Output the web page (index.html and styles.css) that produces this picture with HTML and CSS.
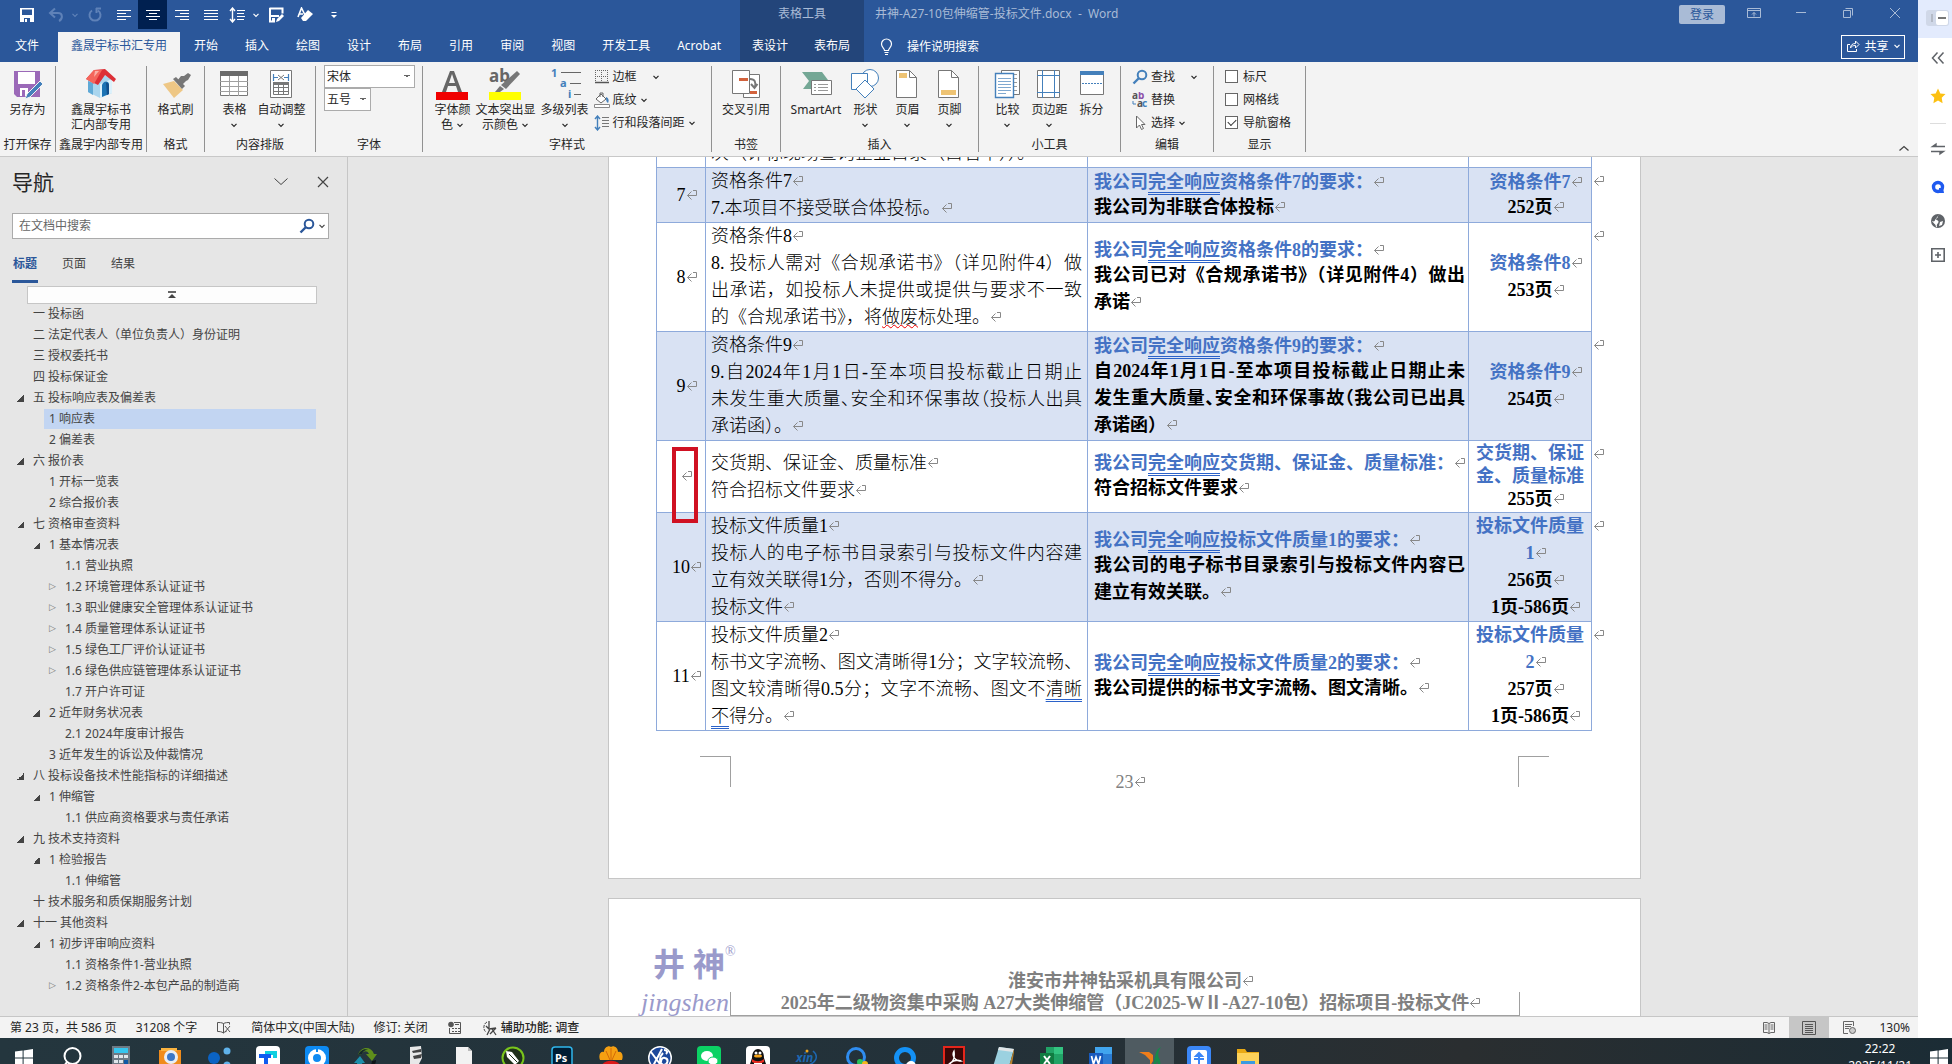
FILE: index.html
```html
<!DOCTYPE html>
<html lang="zh-CN">

<head>
    <meta charset="UTF-8">
    <meta name="viewport" content="width=device-width, initial-scale=1.0">
    <title>井神-A27-10包伸缩管-投标文件.docx - Word</title>
    <link rel="stylesheet" href="styles.css">
</head>

<body>
    <svg class="sprite" aria-hidden="true">
        <symbol id="chev" viewBox="0 0 8 8"><path d="M1.5 2.8 4 5.300l2.500-2.500" fill="none" stroke="currentColor" stroke-width="1.200"/></symbol>
        <symbol id="lens" viewBox="0 0 16 16"><circle cx="10" cy="6" r="4.300" fill="none" stroke="currentColor" stroke-width="2"/><path d="M7 9 1.500 14.500" stroke="currentColor" stroke-width="2.400"/></symbol>
        <symbol id="win" viewBox="0 0 18 18"><path d="M0 2.600 7.600 1.500v7H0zM8.600 1.400 18 0v8.500H8.600zM0 9.500h7.600v7L0 15.400zM8.600 9.500H18V18l-9.400-1.400z" fill="#fff"/></symbol>
    </svg>

    <div class="desktop">
        <div class="app">
            <header class="titlebar">
                <div class="quick">
                    <button class="qa" aria-label="保存"><svg width="16" height="16"><path d="M1 1h14v14H1z" fill="#fff"/><path d="M3 2.500h10V8H3zM5 11h6v4H5z" fill="#2b579a"/><path d="M6 12h2v3H6z" fill="#fff"/></svg></button>
                    <button class="qa dim" aria-label="撤消"><svg width="16" height="16"><path d="M7 1.500 2 6l5 4.500M2.500 6H10c5 0 5 6 1 8" fill="none" stroke="currentColor" stroke-width="2"/></svg></button>
                    <button class="qa narrow dim" aria-label="撤消列表"><svg width="8" height="8"><use href="#chev"/></svg></button>
                    <button class="qa dim" aria-label="恢复"><svg width="16" height="16"><path d="M5 3.500a5.500 5.500 0 1 0 6 0M9 1.500h5M9.500 1v5" fill="none" stroke="currentColor" stroke-width="2"/></svg></button>
                    <button class="qa" aria-label="左对齐"><svg width="16" height="16"><path d="M1 3.500h14M1 6.500h9M1 9.500h14M1 12.500h9" stroke="#fff"/></svg></button>
                    <button class="qa on" aria-label="居中"><svg width="16" height="16"><path d="M1 3.500h14M4 6.500h8M1 9.500h14M4 12.500h8" stroke="#fff"/></svg></button>
                    <button class="qa" aria-label="右对齐"><svg width="16" height="16"><path d="M1 3.500h14M6 6.500h9M1 9.500h14M6 12.500h9" stroke="#fff"/></svg></button>
                    <button class="qa" aria-label="两端对齐"><svg width="16" height="16"><path d="M1 3.500h14M1 6.500h14M1 9.500h14M1 12.500h14" stroke="#fff"/></svg></button>
                    <button class="qa close-next" aria-label="行距"><svg width="16" height="16"><path d="M3.500 1v14M1 4l2.500-3L6 4M1 12l2.500 3L6 12" fill="none" stroke="#fff" stroke-width="1.400"/><path d="M8 3.500h8M8 6.500h7M8 9.500h8M8 12.500h7" stroke="#fff"/></svg></button>
                    <button class="qa narrow" aria-label="行距列表"><svg width="8" height="8"><use href="#chev"/></svg></button>
                    <button class="qa" aria-label="另存为"><svg width="16" height="16"><path d="M1.500 1.500h13v5M2 1v13.500h5" fill="none" stroke="#fff" stroke-width="2"/><path d="M3 8h8v2H3zM4 11h3v4H4z" fill="#fff"/><path d="m8 15 1-3 5-5 2 2-5 5z" fill="#fff"/></svg></button>
                    <button class="qa" aria-label="清除格式"><svg width="16" height="16"><path d="M1 10 4.500 1 8 8M2 7h4" fill="none" stroke="#fff" stroke-width="1.600"/><path d="m11 3 5 4-7 7H6l-2-3z" fill="#fff"/></svg></button>
                    <button class="qa" aria-label="自定义快速访问工具栏"><svg width="8" height="8"><path d="M1.500 1.500h5" stroke="#fff"/><path d="M1 4h6L4 7z" fill="#fff"/></svg></button>
                </div>
                <div class="context-title">表格工具</div>
                <div class="caption">
                    <span class="doc-name">井神-A27-10包伸缩管-投标文件.docx&nbsp; -&nbsp; Word</span>
                    <button class="login">登录</button>
                    <button class="wc" aria-label="功能区显示选项"><svg width="14" height="14"><path d="M.5 2.500h13v9H.5zM.5 4.500h13M7 10.500v-4M5 8.500l2-2 2 2" fill="none" stroke="currentColor"/></svg></button>
                    <button class="wc" aria-label="最小化"><svg width="12" height="12"><path d="M1 5.500h10" stroke="currentColor"/></svg></button>
                    <button class="wc" aria-label="还原"><svg width="12" height="12"><path d="M1.500 3.500h7v7h-7zM3.500 1.500h7v7" fill="none" stroke="currentColor"/></svg></button>
                    <button class="wc" aria-label="关闭"><svg width="12" height="12"><path d="m1 1 10 10M11 1 1 11" stroke="currentColor"/></svg></button>
                </div>
                <nav class="tabs">
                    <a class="file" href="#">文件</a>
                    <a class="active" href="#">鑫晟宇标书汇专用</a>
                    <a href="#">开始</a>
                    <a href="#">插入</a>
                    <a href="#">绘图</a>
                    <a href="#">设计</a>
                    <a href="#">布局</a>
                    <a href="#">引用</a>
                    <a href="#">审阅</a>
                    <a href="#">视图</a>
                    <a href="#">开发工具</a>
                    <a href="#">Acrobat</a>
                </nav>
                <nav class="tabs context-tabs">
                    <a href="#">表设计</a>
                    <a href="#">表布局</a>
                </nav>
                <div class="tell-me">
                    <svg width="16" height="18"><path d="M5.500 12.500c0-2-3-3-3-6.500a5 5 0 0 1 10 0c0 3.500-3 4.500-3 6.500zM5.500 14.500h4M6 16.500h3" fill="none" stroke="#fff" stroke-width="1.200"/></svg>
                    <a href="#">操作说明搜索</a>
                    <button class="share"><svg width="14" height="14"><path d="M4 5.500H1.500v7h9V10M4.500 9c0-3 2-4.500 5-4.500V2l3.500 3.500L9.500 9V6.500C7 6.500 5.500 7 4.500 9z" fill="none" stroke="#fff"/></svg>共享<svg width="8" height="8"><use href="#chev"/></svg></button>
                </div>
            </header>

            <div class="ribbon">
                <section class="group">
                    <div class="tools">
                        <button class="big"><svg width="32" height="32"><path d="M3 3h26v26H6l-3-3z" fill="#9b69b8"/><path d="M7 4h17v12H7zM9 20h8v8H9z" fill="#fff"/><path d="M11 22h3v6h-3z" fill="#9b69b8"/><path d="m14 31 2-5L29 13l3 3-13 13z" fill="#4480bb" stroke="#f3f3f3"/></svg><span>另存为</span></button>
                    </div>
                    <h2>打开保存</h2>
                </section>
                <section class="group">
                    <div class="tools">
                        <button class="big"><svg width="32" height="32"><path d="M3 11v13l12 6 12-5V11L16 5z" fill="#a9d5ee"/><path d="m3 13 5 2v12l-5-3z" fill="#5fa9d6"/><path d="M15 16v14l12-5V11z" fill="#dcf1fb"/><path d="M17 17c1-4 7-5 7 0v9l-7 3z" fill="#1c73b4"/><path d="M21 15c2-1 3 1 3 3v8l-2 1z" fill="#124f8c"/><path d="M1 11 9 2l11-1 11 10-2 3-9-7-7 10z" fill="#dd2f36"/><path d="M9 2h8L9 16l-8-5z" fill="#f4665c"/><path d="M10 3h4l-5 6z" fill="#fbb0a6"/></svg><span>鑫晟宇标书<br>汇内部专用</span></button>
                    </div>
                    <h2>鑫晟宇内部专用</h2>
                </section>
                <section class="group">
                    <div class="tools">
                        <button class="big"><svg width="32" height="32"><path d="m4 16 11-3 9 9-9 8z" fill="#eec785"/><path d="m14 11 3-2 9 9-3 3z" fill="#777"/><path d="m18 13 4-5 3 0 4-3 3 2-3 5-2 1-4 4z" fill="#777"/></svg><span>格式刷</span></button>
                    </div>
                    <h2>格式</h2>
                </section>
                <section class="group g-table">
                    <div class="tools">
                        <button class="big"><svg width="28" height="32"><path d="M.5 3.500h27v24H.5z" fill="#fff" stroke="#777"/><path d="M0 3h28v5H0z" fill="#6b6b6b"/><path d="M0 13.500h28M0 18.500h28M0 23.500h28M9.500 8v20M18.500 8v20" stroke="#a0a0a0"/></svg><span>表格</span><svg class="chev" width="8" height="8"><use href="#chev"/></svg></button>
                        <button class="big"><svg width="24" height="32"><path d="M1.500 2.500h21v27h-21z" fill="#fff" stroke="#777"/><path d="M4.500 6v7M19.500 6v7M5 9.500h4M15 9.500h4" stroke="#4480bb" stroke-width="1.200"/><path d="m9 7 6 5M15 7l-6 5" stroke="#777"/><path d="M4.500 14.500h15v12h-15zM4 19.500h16M4 23.500h16M9.500 17v9M14.500 17v9" fill="none" stroke="#777"/><path d="M4 14h16v3H4z" fill="#777"/></svg><span>自动调整</span><svg class="chev" width="8" height="8"><use href="#chev"/></svg></button>
                    </div>
                    <h2>内容排版</h2>
                </section>
                <section class="group g-font">
                    <div class="rows">
                        <select class="font-name" aria-label="字体"><option>宋体</option></select>
                        <select class="font-size" aria-label="字号"><option>五号</option></select>
                    </div>
                    <h2>字体</h2>
                </section>
                <section class="group g-style">
                    <div class="tools">
                        <button class="big"><svg width="32" height="32"><path d="m6 24 8-21h4l8 21h-4l-2-6h-8l-2 6zM13 15h6L16 6z" fill="#666"/><path d="M0 24h32v8H0z" fill="#f00000"/></svg><span>字体颜<br>色 <svg width="8" height="8"><use href="#chev"/></svg></span></button>
                        <button class="big"><svg width="32" height="32"><text x="0" y="14" class="ab">ab</text><path d="m28 3 3 3-14 15-5-4z" fill="#777"/><path d="m11 18 4 3-4 3H6z" fill="#777"/><path d="M0 24h32v8H0z" fill="#ff0"/></svg><span>文本突出显<br>示颜色 <svg width="8" height="8"><use href="#chev"/></svg></span></button>
                        <button class="big"><svg width="32" height="32"><text x="2" y="9" class="num">1</text><text x="11" y="19" class="num">a</text><text x="19" y="30" class="num">i</text><path d="M12 4.500h20M21 15.500h11M25 26.500h7" stroke="#666"/></svg><span>多级列表</span><svg class="chev" width="8" height="8"><use href="#chev"/></svg></button>
                        <div class="rows">
                            <button class="small wide"><svg width="16" height="16"><path d="M1.500 1v13M13.500 1v13M7.500 1v13M1 1.500h13M1 7.500h13" stroke="#666" stroke-dasharray="1 1"/><path d="M1 13.500h14" stroke="#555" stroke-width="1.500"/></svg>边框<svg width="8" height="8"><use href="#chev"/></svg></button>
                            <button class="small"><svg width="16" height="16"><path d="M7 2 2 7l5 4 5-4z" fill="#fff" stroke="#666"/><path d="M6 5V1h3v4" fill="none" stroke="#666"/><path d="M12 5c3 1 3 4 2 6-2-1-2-4-2-6z" fill="#4480bb"/><path d="M.5 12.500h15v3H.5z" fill="#fff" stroke="#888"/></svg>底纹<svg width="8" height="8"><use href="#chev"/></svg></button>
                            <button class="small"><svg width="16" height="16"><path d="M3.500 1v14M1 4l2.500-3L6 4M1 12l2.500 3L6 12" fill="none" stroke="#4480bb" stroke-width="1.400"/><path d="M8 2.500h7M8 5.500h7M8 8.500h7M8 11.500h7" stroke="#777"/></svg>行和段落间距<svg width="8" height="8"><use href="#chev"/></svg></button>
                        </div>
                    </div>
                    <h2>字样式</h2>
                </section>
                <section class="group">
                    <div class="tools">
                        <button class="big"><svg width="32" height="32"><path d="M13.500 6.500h16v23h-16z" fill="#fff" stroke="#777"/><path d="M20 11c5 0 6 3 5 8M21 16l3.500 4 3-4" fill="none" stroke="#777" stroke-width="2"/><path d="M20 23h7v3h-7z" fill="#d2623c"/><path d="M2.500 2.500h17v23h-17z" fill="#fff" stroke="#777"/><path d="M9 10h9v3H9z" fill="#d2623c"/></svg><span>交叉引用</span></button>
                    </div>
                    <h2>书签</h2>
                </section>
                <section class="group g-insert">
                    <div class="tools">
                        <button class="big smart"><svg width="32" height="32"><path d="M2 4h20l6 8-5 9H3l6-8z" fill="#74a795"/><path d="M11.500 12.500h20v14h-20z" fill="#fff" stroke="#777"/><path d="M14 16.500h2M18 16.500h10M14 19.500h2M18 19.500h10M14 22.500h2M18 22.500h10" stroke="#999"/></svg><span>SmartArt</span></button>
                        <button class="big"><svg width="28" height="32"><circle cx="19" cy="10" r="8.500" fill="#fff" stroke="#4480bb"/><path d="M.5 5.500h16v16H.5z" fill="#fff" stroke="#4480bb"/><path d="m14 12 9 9-9 9-9-9z" fill="#fff" stroke="#4480bb"/></svg><span>形状</span><svg class="chev" width="8" height="8"><use href="#chev"/></svg></button>
                        <button class="big"><svg width="28" height="32"><path d="M3.500 2.500h13l7 7v20h-20z" fill="#fff" stroke="#777"/><path d="M16.500 2.500v7h7" fill="none" stroke="#777"/><path d="M6 5h8v5H6z" fill="#eec373"/></svg><span>页眉</span><svg class="chev" width="8" height="8"><use href="#chev"/></svg></button>
                        <button class="big"><svg width="28" height="32"><path d="M3.500 2.500h13l7 7v20h-20z" fill="#fff" stroke="#777"/><path d="M16.500 2.500v7h7" fill="none" stroke="#777"/><path d="M6 22h15v5H6z" fill="#eec373"/></svg><span>页脚</span><svg class="chev" width="8" height="8"><use href="#chev"/></svg></button>
                    </div>
                    <h2>插入</h2>
                </section>
                <section class="group g-mini">
                    <div class="tools">
                        <button class="big"><svg width="28" height="32"><path d="M8.500 2.500h18v24h-18z" fill="#fff" stroke="#777"/><path d="M20 6.500h4M20 10.500h4M20 14.500h4M20 18.500h4M20 22.500h4" stroke="#999"/><path d="M2.500 5.500h18v24h-18z" fill="#fff" stroke="#4480bb" stroke-width="1.400"/><path d="M5 10.500h13M5 13.500h13M5 16.500h13M5 19.500h13M5 22.500h13M5 25.500h8" stroke="#7fa8d0"/></svg><span>比较</span><svg class="chev" width="8" height="8"><use href="#chev"/></svg></button>
                        <button class="big"><svg width="28" height="32"><path d="M2.500 2.500h22v27h-22z" fill="#fff" stroke="#777"/><path d="M7.500 2v28M19.500 2v28M2 7.500h23M2 24.500h23" stroke="#4480bb"/></svg><span>页边距</span><svg class="chev" width="8" height="8"><use href="#chev"/></svg></button>
                        <button class="big"><svg width="28" height="32"><path d="M2.500 3.500h23v23h-23z" fill="#fff" stroke="#777"/><path d="M2 3h24v4H2z" fill="#4480bb"/><path d="M4 15.500h20" stroke="#4480bb" stroke-dasharray="2 1"/></svg><span>拆分</span></button>
                    </div>
                    <h2>小工具</h2>
                </section>
                <section class="group g-edit">
                    <div class="rows">
                        <button class="small wide"><svg class="blue" width="16" height="16"><use href="#lens"/></svg>查找<svg width="8" height="8"><use href="#chev"/></svg></button>
                        <button class="small"><svg width="16" height="16"><text x="0" y="7" class="rep">a</text><text x="6" y="7" class="rep purple">b</text><text x="5" y="15" class="rep">a</text><text x="10" y="15" class="rep blue">c</text><path d="M1 9v3h3" fill="none" stroke="#4480bb"/></svg>替换</button>
                        <button class="small"><svg width="16" height="16"><path d="M4.500 1v12l3-3 2 4.500 2-1L9.500 9.500H13z" fill="#fff" stroke="#666"/></svg>选择<svg width="8" height="8"><use href="#chev"/></svg></button>
                    </div>
                    <h2>编辑</h2>
                </section>
                <section class="group g-show">
                    <div class="rows">
                        <label class="check"><input type="checkbox">标尺</label>
                        <label class="check"><input type="checkbox">网格线</label>
                        <label class="check"><input type="checkbox" checked>导航窗格</label>
                    </div>
                    <h2>显示</h2>
                </section>
                <button class="collapse" aria-label="折叠功能区"><svg width="12" height="8"><path d="m1.500 6.500 4.500-4 4.500 4" fill="none" stroke="#444" stroke-width="1.300"/></svg></button>
            </div>

            <div class="workspace">
                <aside class="navpane">
                    <div class="nav-head">
                        <h1>导航</h1>
                        <button aria-label="任务窗格选项"><svg width="16" height="10"><path d="m1.500 1.500 6.500 6 6.500-6" fill="none" stroke="#444"/></svg></button>
                        <button aria-label="关闭"><svg width="12" height="12"><path d="m1 1 10 10M11 1 1 11" stroke="#444" stroke-width="1.200"/></svg></button>
                    </div>
                    <div class="search">
                        <input type="text" aria-label="在文档中搜索" placeholder="在文档中搜索">
                        <button aria-label="搜索"><svg width="16" height="16"><use href="#lens"/></svg></button>
                        <button class="opt" aria-label="搜索选项"><svg width="8" height="8"><use href="#chev"/></svg></button>
                    </div>
                    <div class="nav-tabs">
                        <a class="active" href="#">标题</a>
                        <a href="#">页面</a>
                        <a href="#">结果</a>
                    </div>
                    <button class="jump" aria-label="跳转到文档开头"><svg width="8" height="8"><path d="M0 1h8" stroke="#333" stroke-width="1.500"/><path d="M4 3 0 7h8z" fill="#444"/></svg></button>
                    <ul class="tree">
                        <li><i></i><a href="#">一 投标函</a></li>
                        <li><i></i><a href="#">二 法定代表人（单位负责人）身份证明</a></li>
                        <li><i></i><a href="#">三 授权委托书</a></li>
                        <li><i></i><a href="#">四 投标保证金</a></li>
                        <li><i class="open"></i><a href="#">五 投标响应表及偏差表</a></li>
                        <li class="l2 current"><i></i><a href="#">1 响应表</a></li>
                        <li class="l2"><i></i><a href="#">2 偏差表</a></li>
                        <li><i class="open"></i><a href="#">六 报价表</a></li>
                        <li class="l2"><i></i><a href="#">1 开标一览表</a></li>
                        <li class="l2"><i></i><a href="#">2 综合报价表</a></li>
                        <li><i class="open"></i><a href="#">七 资格审查资料</a></li>
                        <li class="l2"><i class="open"></i><a href="#">1 基本情况表</a></li>
                        <li class="l3"><i></i><a href="#">1.1 营业执照</a></li>
                        <li class="l3"><i class="shut"></i><a href="#">1.2 环境管理体系认证证书</a></li>
                        <li class="l3"><i class="shut"></i><a href="#">1.3 职业健康安全管理体系认证证书</a></li>
                        <li class="l3"><i class="shut"></i><a href="#">1.4 质量管理体系认证证书</a></li>
                        <li class="l3"><i class="shut"></i><a href="#">1.5 绿色工厂评价认证证书</a></li>
                        <li class="l3"><i class="shut"></i><a href="#">1.6 绿色供应链管理体系认证证书</a></li>
                        <li class="l3"><i></i><a href="#">1.7 开户许可证</a></li>
                        <li class="l2"><i class="open"></i><a href="#">2 近年财务状况表</a></li>
                        <li class="l3"><i></i><a href="#">2.1 2024年度审计报告</a></li>
                        <li class="l2"><i></i><a href="#">3 近年发生的诉讼及仲裁情况</a></li>
                        <li><i class="open"></i><a href="#">八 投标设备技术性能指标的详细描述</a></li>
                        <li class="l2"><i class="open"></i><a href="#">1 伸缩管</a></li>
                        <li class="l3"><i></i><a href="#">1.1 供应商资格要求与责任承诺</a></li>
                        <li><i class="open"></i><a href="#">九 技术支持资料</a></li>
                        <li class="l2"><i class="open"></i><a href="#">1 检验报告</a></li>
                        <li class="l3"><i></i><a href="#">1.1 伸缩管</a></li>
                        <li><i></i><a href="#">十 技术服务和质保期服务计划</a></li>
                        <li><i class="open"></i><a href="#">十一 其他资料</a></li>
                        <li class="l2"><i class="open"></i><a href="#">1 初步评审响应资料</a></li>
                        <li class="l3"><i></i><a href="#">1.1 资格条件1-营业执照</a></li>
                        <li class="l3"><i class="shut"></i><a href="#">1.2 资格条件2-本包产品的制造商</a></li>
                    </ul>
                </aside>

                <main class="canvas">
                    <article class="page first">
                        <table class="response">
                            <colgroup><col class="c-no"><col class="c-req"><col class="c-ans"><col class="c-page"><col class="c-end"></colgroup>
                            <tr>
                                <td></td>
                                <td><p>次（评标现场查询企业目录（白名单））。</p></td>
                                <td></td>
                                <td></td>
                                <td class="end"></td>
                            </tr>
                            <tr class="shade">
                                <td class="no"><p class="ret">7</p></td>
                                <td><p class="ret">资格条件7</p><p class="ret">7.本项目不接受联合体投标。</p></td>
                                <td class="ans"><p class="lead ret">我公司<u>完全响应</u>资格条件7的要求：</p><p class="ret">我公司为非联合体投标</p></td>
                                <td class="ref"><p class="lead ret">资格条件7</p><p class="ret">252页</p></td>
                                <td class="end"><p class="ret"></p></td>
                            </tr>
                            <tr>
                                <td class="no"><p class="ret">8</p></td>
                                <td><p class="ret">资格条件8</p><p class="full">8. 投标人需对《合规承诺书》（详见附件4）做</p><p class="full">出承诺，如投标人未提供或提供与要求不一致</p><p class="ret">的《合规承诺书》，将<span class="typo">做废</span>标处理。</p></td>
                                <td class="ans"><p class="lead ret">我公司<u>完全响应</u>资格条件8的要求：</p><p class="full">我公司已对《合规承诺书》（详见附件4）做出</p><p class="ret">承诺</p></td>
                                <td class="ref"><p class="lead tall ret">资格条件8</p><p class="ret">253页</p></td>
                                <td class="end"><p class="ret"></p></td>
                            </tr>
                            <tr class="shade">
                                <td class="no"><p class="ret">9</p></td>
                                <td><p class="ret">资格条件9</p><p class="full">9.自2024年1月1日-至本项目投标截止日期止</p><p class="full tight">未发生重大质量、安全和环保事故（投标人出具</p><p class="ret">承诺函）。</p></td>
                                <td class="ans"><p class="lead ret">我公司<u>完全响应</u>资格条件9的要求：</p><p class="full">自2024年1月1日-至本项目投标截止日期止未</p><p class="full tight">发生重大质量、安全和环保事故（我公司已出具</p><p class="ret">承诺函）</p></td>
                                <td class="ref"><p class="lead tall ret">资格条件9</p><p class="ret">254页</p></td>
                                <td class="end"><p class="ret"></p></td>
                            </tr>
                            <tr class="short">
                                <td class="no"><p class="ret"></p><div class="redbox"></div></td>
                                <td><p class="ret">交货期、保证金、质量标准</p><p class="ret">符合招标文件要求</p></td>
                                <td class="ans"><p class="lead ret">我公司<u>完全响应</u>交货期、保证金、质量标准：</p><p class="ret">符合招标文件要求</p></td>
                                <td class="ref"><p class="lead compact">交货期、保证<br>金、质量标准</p><p class="compact ret">255页</p></td>
                                <td class="end"><p class="ret"></p></td>
                            </tr>
                            <tr class="shade">
                                <td class="no"><p class="ret">10</p></td>
                                <td><p class="ret">投标文件质量1</p><p class="full">投标人的电子标书目录索引与投标文件内容建</p><p class="ret">立有效关联得1分，否则不得分。</p><p class="ret">投标文件</p></td>
                                <td class="ans"><p class="lead ret">我公司<u>完全响应</u>投标文件质量1的要求：</p><p class="full">我公司的电子标书目录索引与投标文件内容已</p><p class="ret">建立有效关联。</p></td>
                                <td class="ref"><p class="lead tall ret">投标文件质量<br>1</p><p class="ret">256页</p><p class="ret">1页-586页</p></td>
                                <td class="end"><p class="ret"></p></td>
                            </tr>
                            <tr>
                                <td class="no"><p class="ret">11</p></td>
                                <td><p class="ret">投标文件质量2</p><p class="full">标书文字流畅、图文清晰得1分；文字较流畅、</p><p class="full">图文较清晰得0.5分；文字不流畅、图文不<u>清晰</u></p><p class="ret"><u>不</u>得分。</p></td>
                                <td class="ans"><p class="lead ret">我公司<u>完全响应</u>投标文件质量2的要求：</p><p class="ret">我公司提供的标书文字流畅、图文清晰。</p></td>
                                <td class="ref"><p class="lead tall ret">投标文件质量<br>2</p><p class="ret">257页</p><p class="ret">1页-586页</p></td>
                                <td class="end"><p class="ret"></p></td>
                            </tr>
                        </table>
                        <footer class="page-foot">
                            <span class="corner left"></span>
                            <p class="ret">23</p>
                            <span class="corner right"></span>
                        </footer>
                    </article>
                    <article class="page second">
                        <div class="logo">
                            <span class="logo-cn">井 神<sup>®</sup></span>
                            <span class="logo-en">jingshen</span>
                        </div>
                        <header class="page-head">
                            <p class="ret">淮安市井神钻采机具有限公司</p>
                            <p class="project ret">2025年二级物资集中采购 A27大类伸缩管（JC2025-WⅡ-A27-10包）招标项目-投标文件</p>
                        </header>
                    </article>
                </main>
            </div>

            <footer class="status">
                <span>第 23 页，共 586 页</span>
                <span>31208 个字</span>
                <svg width="16" height="14"><path d="M7.500 2.500c-2-1-4-1-6-1v9c2 0 4 0 6 1.500 1-1 2-1.500 3-1.500M7.500 2.500V12M7.500 2.500c2-1 4-1 6-1v2M9 5l5 6M14 5l-5 6" fill="none" stroke="#555"/></svg>
                <span>简体中文(中国大陆)</span>
                <span>修订: 关闭</span>
                <svg width="16" height="14"><circle cx="4" cy="3.500" r="2.800" fill="#555"/><path d="M7 1.500h6.500v11h-11V7" fill="none" stroke="#555"/><path d="M8 3.500h4M5 7.500h2M8 7.500h2M11 7.500h2M5 10.500h2M8 10.500h2M11 10.500h2" stroke="#555"/></svg>
                <span class="access"><svg width="16" height="16"><path d="M5 2C1 4 1 10 4 12" fill="none" stroke="#444" stroke-dasharray="3 1"/><path d="M7 1v7M4 6l3 3 7-1M8 9l-3 6M10 9l4 6M8 14l6-6" fill="none" stroke="#444" stroke-width="1.300"/></svg>辅助功能: 调查</span>
                <span class="views">
                    <button aria-label="阅读视图"><svg width="14" height="14"><path d="M7 2.500v10M1.500 1.500H5l2 1 2-1h3.500v10H9l-2 1-2-1H1.500zM2.500 4h3M2.500 6h3M2.500 8h3M8.500 4h3M8.500 6h3M8.500 8h3" fill="none" stroke="#666"/></svg></button>
                    <button class="on" aria-label="页面视图"><svg width="14" height="14"><path d="M.5.5h13v13H.5zM3 3.500h8M3 5.500h8M3 7.500h8M3 9.500h8M3 11.500h8" fill="none" stroke="#555"/></svg></button>
                    <button aria-label="Web 版式视图"><svg width="14" height="14"><path d="M11.500 5V.5H1.500v12H6M3 3.500h7M3 5.500h6M3 7.500h4" fill="none" stroke="#666"/><circle cx="10.500" cy="9.500" r="3" fill="#ccc" stroke="#666"/></svg></button>
                    <span class="zoom">130%</span>
                </span>
            </footer>
        </div>

        <aside class="sidebar">
            <div class="toggle"><span></span><b></b></div>
            <button aria-label="收起"><svg width="16" height="16"><path d="M7.500 2.500 2.500 8l5 5.500M13.500 2.500 8.500 8l5 5.500" fill="none" stroke="#5f6368" stroke-width="1.500"/></svg></button>
            <button aria-label="收藏"><svg width="16" height="16"><path d="m8 .5 2.300 4.900 5.200.7-3.800 3.700.9 5.400L8 12.600l-4.600 2.600.9-5.400L.5 6.100l5.200-.7z" fill="#fcc012"/></svg></button>
            <hr>
            <button aria-label="切换"><svg width="16" height="16"><path d="M15 5.500H2.500L6 3v2.500M1 10.500h12.500L10 13v-2.500" fill="#5f6368" stroke="#5f6368" stroke-width="1.400"/></svg></button>
            <button aria-label="搜索"><svg width="16" height="16"><circle cx="8" cy="8" r="4.500" fill="none" stroke="#1f5af0" stroke-width="3.400"/><path d="M9 9h4l1 5H9z" fill="#1f5af0"/></svg></button>
            <button aria-label="浏览"><svg width="16" height="16"><circle cx="8" cy="8" r="7" fill="#5f6368"/><path d="M9 1.500C7 3 9 4 6.500 5.500 5 7 8 7 8.500 8.500S6 11 7 14l-1 0c0-3-3-4-4-6 2 1 3 0 3-1M10 9l3-1-1 4-3 1z" fill="#fff"/></svg></button>
            <button aria-label="添加"><svg width="16" height="16"><path d="M1.800 1.800h12.400v12.400H1.800zM8 5v6M5 8h6" fill="none" stroke="#5f6368" stroke-width="1.600"/></svg></button>
        </aside>

        <footer class="taskbar">
            <button class="start" aria-label="开始"><svg width="18" height="18"><use href="#win"/></svg></button>
            <button aria-label="搜索"><svg width="24" height="24"><circle cx="12.500" cy="10" r="8" fill="none" stroke="#fff" stroke-width="2"/><path d="m7 16-5 7" stroke="#fff" stroke-width="2"/></svg></button>
            <button aria-label="计算器"><svg width="24" height="24"><path d="M3 0h18v24H3z" fill="#6d7a85"/><path d="M5 2h14v5H5z" fill="#36c5ee"/><path d="M5 9h4v3H5zM10 9h4v3h-4zM15 9h4v3h-4zM5 14h4v3H5zM10 14h4v3h-4z" fill="#dfe5ea"/><path d="M15 14h4v8h-4z" fill="#0f58a5"/></svg></button>
            <button aria-label="截图"><svg width="24" height="24"><path d="M1 4h22v18H1z" fill="#f08c1c"/><path d="M3 2h16v3H3z" fill="#fbb440"/><circle cx="13" cy="11" r="7" fill="#e9eef5"/><circle cx="13" cy="11" r="4" fill="#3b78c9"/></svg></button>
            <button aria-label="音频"><svg width="24" height="24"><circle cx="7" cy="12" r="6" fill="#0b63c4"/><circle cx="20" cy="5" r="3.500" fill="#5fb2ea"/><circle cx="20" cy="19" r="3.500" fill="#5fb2ea"/></svg></button>
            <button aria-label="腾讯文档"><svg width="24" height="24"><rect width="24" height="24" rx="4" fill="#fff"/><path d="M9 5h12v7h-4V9H9z" fill="#10cfe0"/><path d="M3 8h12v4h-3v10H8V12H3z" fill="#0f5cf0"/></svg></button>
            <button aria-label="浏览器"><svg width="24" height="24"><rect width="24" height="24" rx="4" fill="#0d8af2"/><circle cx="12" cy="12" r="6.500" fill="none" stroke="#fff" stroke-width="5"/><path d="M12 0v6" stroke="#0d8af2" stroke-width="2"/></svg></button>
            <button aria-label="同步"><svg width="24" height="24"><path d="M4 9C7 0 17 0 20 8l3 0-5 7-6-7 3 0c-2-4-6-3-7 0z" fill="#5f8f1c"/><path d="M4 9c2-4 6-7 10-5-4 0-5 2-6 4z" fill="#14262a"/><path d="m6 10 5 7H8c1 3 3 5 5 6-6 1-10-2-10-6H0z" fill="#1d8fab"/><path d="M22 14c0 6-5 9-10 8 4-1 6-4 6-7z" fill="#0d1518"/></svg></button>
            <button aria-label="打印"><svg width="24" height="24"><path d="m7 1 11-1 1 12-6 12H7z" fill="#e8e8e8"/><path d="m9 5 9-2v3l-8 1zM10 10l9-2-1 4-7 1z" fill="#444"/></svg></button>
            <button aria-label="文档"><svg width="24" height="24"><path d="M4 1h12l4 4v19H4z" fill="#f2f2f2"/><path d="M16 1v4h4z" fill="#bbb"/></svg></button>
            <button aria-label="CorelDRAW"><svg width="24" height="24"><circle cx="12" cy="12" r="10.500" fill="#20301c" stroke="#79c51c" stroke-width="2"/><path d="m5 5 6 1 7 9-4 4-8-8z" fill="#fff"/><path d="m8 8 8 8" stroke="#20301c"/></svg></button>
            <button aria-label="Photoshop"><svg width="24" height="24"><rect x="2" y="1" width="20" height="22" rx="3" fill="#001d33" stroke="#2fb6ec" stroke-width="1.500"/><text x="5" y="16" class="ps">Ps</text></svg></button>
            <button aria-label="中石油"><svg width="24" height="24"><path d="M1 14C-1 8 2 5 5 6c0-5 5-7 7-5 2-2 7 0 7 5 3-1 6 2 4 8z" fill="#f5a012"/><path d="M12 2v12M7 5l4 9M17 5l-4 9" stroke="#d46a08"/><path d="M2 20c4-7 16-7 20 0v4H2z" fill="#dc1818"/></svg></button>
            <button aria-label="XB"><svg width="24" height="24"><circle cx="12" cy="12" r="12" fill="#fff"/><circle cx="12" cy="12" r="10.500" fill="#1b479b"/><path d="m3 6 9 12M14 3 5 20M15 7c-4 4-4 10 0 12 5 0 6-6 2-7-3-1-4 2-4 4M16 4c3 0 4 2 2 4" fill="none" stroke="#fff" stroke-width="2"/></svg></button>
            <button aria-label="微信"><svg width="24" height="24"><rect width="24" height="24" rx="4" fill="#0bd264"/><ellipse cx="10" cy="10" rx="6" ry="5" fill="#fff"/><ellipse cx="16" cy="15" rx="5" ry="4" fill="#fff" stroke="#0bd264"/></svg></button>
            <button aria-label="QQ"><svg width="24" height="24"><rect width="24" height="24" rx="4" fill="#fff"/><path d="M6 12c0-12 12-12 12 0l2 6-2 1v5H6v-5l-2-1z" fill="#111"/><circle cx="10" cy="7" r="1.500" fill="#fff"/><circle cx="14" cy="7" r="1.500" fill="#fff"/><ellipse cx="12" cy="10" rx="4" ry="1.500" fill="#f5a41c"/><path d="M6 13c4 3 8 3 12 0v3c-4 2-8 2-12 0z" fill="#e72d22"/><path d="M8 17h8v7H8z" fill="#fff"/></svg></button>
            <button aria-label="xin"><svg width="24" height="24"><text x="1" y="16" class="xin">xin</text><path d="M18 5c6 5 4 13-9 15" fill="none" stroke="#1d67b0" stroke-width="1.500"/><circle cx="12" cy="5" r="1.500" fill="#f0a41c"/></svg></button>
            <button aria-label="企业微信"><svg width="24" height="24"><circle cx="12" cy="11" r="8.500" fill="none" stroke="#2f8df0" stroke-width="3"/><circle cx="16" cy="16" r="3" fill="#28c25a"/><circle cx="21" cy="18" r="3" fill="#f7b91c"/></svg></button>
            <button aria-label="QQ浏览器"><svg width="24" height="24"><circle cx="12" cy="12" r="8.500" fill="none" stroke="#1491f5" stroke-width="5"/><circle cx="18" cy="20" r="5" fill="#fff"/></svg></button>
            <button aria-label="Acrobat"><svg width="24" height="24"><rect x="2" y="1" width="20" height="23" fill="#3a0808" stroke="#e5261b" stroke-width="2"/><path d="M6 19c6-3 7-8 6-14-3 5 2 11 7 10-5-2-9 0-13 4z" fill="none" stroke="#fff" stroke-width="1.300"/></svg></button>
            <button aria-label="记事本"><svg width="24" height="24"><path d="m8 1 15 2-6 21H1z" fill="#9bd1e0"/><path d="m8 1 15 2-1 3L7 4z" fill="#e0e4e6"/><path d="m23 3-6 21h3l3-18z" fill="#b9822d"/></svg></button>
            <button aria-label="Excel"><svg width="24" height="24"><path d="M6 1h17v23H6z" fill="#21a366"/><path d="M14 1h9v7h-9z" fill="#33c481"/><path d="M0 7h14v14H0z" fill="#107c41"/><path d="m4 10 6 8M10 10l-6 8" stroke="#fff" stroke-width="2"/></svg></button>
            <button aria-label="Word"><svg width="24" height="24"><path d="M6 1h17v23H6z" fill="#2b7cd3"/><path d="M6 1h17v7H6z" fill="#41a5ee"/><path d="M0 7h14v14H0z" fill="#185abd"/><path d="m2.500 10 2 8L7 11l2.500 7 2-8" fill="none" stroke="#fff" stroke-width="1.700"/></svg></button>
            <button class="on" aria-label="标书"><svg width="24" height="24"><path d="M1 6h10l4 3v6l-3 5v-6L7 9z" fill="#ef7d1a"/><path d="M23 1c-8 3-4 15-11 22 6-1 6-4 7-8l2 8h2l-1-9c-3-4-2-9 1-13z" fill="#178a4a"/></svg></button>
            <button aria-label="助手"><svg width="24" height="24"><rect width="24" height="24" rx="4" fill="#3b87f7"/><rect x="4" y="4" width="16" height="20" rx="2" fill="#fff"/><path d="m12 7-3 3h6zM12 10v10M7 13h10" stroke="#3b87f7" stroke-width="2" fill="#3b87f7"/></svg></button>
            <button aria-label="文件夹"><svg width="24" height="24"><path d="M1 3h8l2 3h12v18H1z" fill="#e8a915"/><path d="M1 7h22v17H1z" fill="#fdd25a"/><path d="M5 15h14v9H5z" fill="#3b9ae0"/></svg></button>
            <div class="clock"><span>22:22</span><span>2025/11/21</span></div>
            <button class="start second-start" aria-label="开始"><svg width="18" height="18"><use href="#win"/></svg></button>
        </footer>
    </div>
</body>

</html>
```
FILE: styles.css
```css
* {
    box-sizing: border-box;
}

html,
body {
    margin: 0;
    height: 100%;
    overflow: hidden;
}

body {
    font-family: "Noto Sans", "Noto Sans CJK SC", sans-serif;
    font-size: 12px;
    line-height: 15px;
    color: #262626;
}

button {
    font: inherit;
    color: inherit;
    background: none;
    border: 0;
    padding: 0;
    cursor: pointer;
}

a {
    color: inherit;
    text-decoration: none;
}

h1,
h2,
p,
ul {
    margin: 0;
    padding: 0;
}

h1,
h2 {
    font-weight: normal;
}

.sprite {
    display: none;
}

.desktop {
    display: grid;
    grid-template-columns: minmax(0, 1fr) 34px;
    grid-template-rows: minmax(0, 1fr) 26px;
    height: 100vh;
}

.app {
    display: flex;
    flex-direction: column;
    min-height: 0;
}

/* title bar and tabs */
.titlebar {
    display: grid;
    grid-template-columns: 740px 124px 1fr;
    grid-template-rows: 32px 30px;
    flex: none;
    background: #2b579a;
    color: #fff;
}

.quick {
    display: flex;
    align-items: flex-start;
    padding-left: 12px;
}

.qa {
    display: flex;
    align-items: center;
    justify-content: center;
    width: 29px;
    height: 29px;
}

.qa.narrow {
    width: 10px;
}

.qa.close-next {
    width: 24px;
    margin-right: 2px;
}

.qa.dim {
    color: #5f82b8;
}

.qa.on {
    background: #002050;
}

.context-title {
    background: #23457a;
    color: #a9bbd6;
    text-align: center;
    line-height: 28px;
}

.caption {
    display: flex;
    align-items: flex-start;
    gap: 2px;
    padding: 0 1px 0 11px;
    color: #a9bbd6;
}

.doc-name {
    flex: 1;
    line-height: 28px;
}

.login {
    width: 46px;
    height: 19px;
    margin: 5px 4px 0 0;
    background: #a9bbd6;
    color: #2b579a;
    border-radius: 2px;
    line-height: 19px;
}

.wc {
    display: flex;
    align-items: center;
    justify-content: center;
    width: 45px;
    height: 26px;
}

.tabs {
    display: flex;
    gap: 1px;
    padding-left: 2px;
}

.tabs a {
    padding: 0 13px;
    line-height: 28px;
}

.tabs .file {
    margin-right: 5px;
}

.tabs .active {
    background: #f3f3f3;
    color: #2b579a;
}

.context-tabs {
    gap: 2px;
    background: #23457a;
    padding-left: 0;
}

.context-tabs a {
    padding: 0 12px;
}

.tell-me {
    display: flex;
    align-items: center;
    gap: 12px;
    padding: 0 13px 0 15px;
}

.tell-me a {
    flex: 1;
    line-height: 28px;
}

.share {
    display: flex;
    align-items: center;
    justify-content: space-between;
    width: 64px;
    height: 24px;
    padding: 0 3px 2px 4px;
    border: 1px solid #fff;
}

/* ribbon */
.ribbon {
    display: grid;
    grid-template-columns: 56px 91px 58px 111px 107px 289px 69px 198px 142px 93px 92px 1fr;
    flex: none;
    height: 95px;
    padding: 4px 0;
    background: #f3f3f3;
    border-bottom: 1px solid #c8c8c8;
}

.group {
    display: flex;
    flex-direction: column;
    justify-content: space-between;
    min-width: 0;
    border-right: 1px solid #919191;
}

.group h2 {
    font-size: 12px;
    line-height: 15px;
    text-align: center;
    white-space: nowrap;
}

.tools {
    display: flex;
    align-items: flex-start;
    justify-content: center;
}

.big {
    display: flex;
    flex-direction: column;
    align-items: center;
    padding-top: 2px;
    white-space: nowrap;
}

.big span {
    margin-top: 2px;
    line-height: 15px;
}

.big .chev {
    margin-top: 4px;
}

.rows {
    display: flex;
    flex-direction: column;
    align-items: flex-start;
    margin-top: -1px;
}

.small,
.check {
    display: flex;
    align-items: center;
    gap: 3px;
    height: 23px;
    white-space: nowrap;
}

.small.wide svg:last-child {
    margin-left: 12px;
}

.g-table .tools {
    gap: 9px;
    padding-left: 6px;
}

.g-style .tools {
    gap: 5px;
    padding-right: 4px;
}

.g-insert .tools {
    gap: 14px;
    padding-right: 5px;
}

.smart {
    margin-right: -4px;
}

.g-mini .tools {
    gap: 10px;
}

.g-font .rows {
    padding-left: 8px;
}

.g-edit .rows,
.g-show .rows {
    padding-left: 11px;
}

.g-font select {
    appearance: none;
    height: 23px;
    padding: 0 2px;
    font: inherit;
    color: #262626;
    border: 1px solid #ababab;
    border-radius: 0;
    background: linear-gradient(to bottom left, #666 50%, transparent 50%) right 7px center / 3px 3px no-repeat,
        linear-gradient(to bottom right, #666 50%, transparent 50%) right 4px center / 3px 3px no-repeat, #fff;
}

.font-name {
    width: 91px;
}

.font-size {
    width: 47px;
}

.ab {
    font-size: 17px;
    font-weight: bold;
    fill: #666;
}

.num {
    font-size: 11px;
    font-weight: bold;
    fill: #4480bb;
}

.rep {
    font-size: 10px;
    font-weight: bold;
    fill: #555;
}

.rep.purple {
    fill: #8c4fa8;
}

.rep.blue {
    fill: #4480bb;
}

.small .blue {
    color: #4480bb;
}

.check {
    gap: 5px;
}

.check input {
    appearance: none;
    width: 13px;
    height: 13px;
    margin: 0;
    border: 1px solid #666;
    background: #fff;
}

.check input:checked::after {
    content: "";
    display: block;
    width: 7px;
    height: 4px;
    margin: 2px;
    border-left: 1px solid #333;
    border-bottom: 1px solid #333;
    transform: rotate(-45deg);
}

.collapse {
    align-self: end;
    justify-self: end;
    height: 8px;
    margin-right: 8px;
    line-height: 0;
}

/* navigation pane */
.workspace {
    display: flex;
    flex: 1;
    min-height: 0;
    background: #e6e6e6;
}

.navpane {
    flex: none;
    width: 348px;
    padding: 0 18px 0 12px;
    border-right: 1px solid #c6c6c6;
    color: #444;
}

.nav-head {
    display: flex;
    align-items: center;
    gap: 28px;
    height: 56px;
    padding-bottom: 7px;
    line-height: 0;
}

.nav-head h1 {
    flex: 1;
    font-size: 21px;
    line-height: 48px;
    color: #262626;
}

.search {
    display: flex;
    align-items: center;
    height: 26px;
    padding: 0 2px 0 6px;
    background: #fff;
    border: 1px solid #ababab;
}

.search input {
    flex: 1;
    min-width: 0;
    padding: 0 0 2px;
    border: 0;
    outline: 0;
    font: inherit;
    background: none;
}

.search input::placeholder {
    color: #666;
}

.search button {
    line-height: 0;
    color: #2b579a;
}

.search .opt {
    margin-left: 3px;
    color: #444;
}

.nav-tabs {
    display: flex;
    gap: 23px;
    margin-top: 15px;
}

.nav-tabs a {
    padding: 2px 1px 9px;
    border-bottom: 3px solid transparent;
}

.nav-tabs .active {
    color: #2b579a;
    font-weight: bold;
    border-color: #2b579a;
}

.jump {
    display: block;
    width: 290px;
    height: 18px;
    margin: 3px 0 0 15px;
    background: #fdfdfd;
    border: 1px solid #c6c6c6;
    line-height: 0;
}

.tree {
    margin-top: -1px;
    padding-right: 1px;
    list-style: none;
}

.tree li {
    display: flex;
    align-items: center;
    height: 21px;
    padding-right: 12px;
    white-space: nowrap;
}

.tree li.l2 {
    padding-left: 16px;
}

.tree li.l3 {
    padding-left: 32px;
}

.tree i {
    flex: none;
    width: 16px;
    height: 10px;
}

.tree .open {
    background: linear-gradient(to bottom right, transparent 50%, #444 50%) 5px 2px / 7px 7px no-repeat;
}

.tree .shut::before {
    content: "▷";
    display: block;
    padding-left: 5px;
    font: normal 9px/9px "DejaVu Sans", sans-serif;
    color: #777;
}

.tree a {
    flex: 1;
    padding-left: 5px;
    line-height: 20px;
}

.tree .current a {
    background: #c2d5f2;
}

/* document */
.canvas {
    flex: 1;
    min-width: 0;
    padding-right: 17px;
    overflow: hidden;
    font-family: "Liberation Serif", "Noto Sans CJK SC", serif;
    font-size: 18px;
    line-height: 27px;
    color: #000;
}

.page {
    position: relative;
    width: 1033px;
    margin: 0 auto;
    background: #fff;
    border: 1px solid #c6c6c6;
}

.page.first {
    height: 741px;
    margin-top: -19px;
    padding-left: 47px;
}

.page.second {
    height: 400px;
    margin-top: 19px;
    padding: 71px 120px 0 121px;
}

.response {
    table-layout: fixed;
    width: 954px;
    border-collapse: collapse;
}

.c-no {
    width: 49px;
}

.c-req {
    width: 382px;
}

.c-ans {
    width: 381px;
}

.c-page {
    width: 123px;
}

.response td {
    height: 28px;
    padding: 0 5px;
    border: 1px solid #8eaadb;
    font-weight: 300;
    white-space: nowrap;
}

.response .shade td {
    background: #d9e2f3;
}

.response .short td {
    height: 72px;
}

.response .no {
    position: relative;
    text-align: center;
}

.response .ans {
    padding-left: 6px;
    padding-right: 3px;
    font-weight: bold;
}

.response .ref {
    padding: 0;
    text-align: center;
    font-weight: bold;
}

.response td.end {
    padding: 0 0 0 1px;
    border: 0;
    background: none;
    vertical-align: top;
}

.response .full {
    text-align: justify;
    text-align-last: justify;
}

.response .tight {
    font-feature-settings: "halt";
}

.lead {
    line-height: 24px;
    color: #4472c4;
}

.lead.tall {
    line-height: 27px;
}

.compact {
    line-height: 23px;
}

.ret::after {
    content: "";
    display: inline-block;
    width: 12px;
    height: 12px;
    margin-right: -12px;
    background: url("data:image/svg+xml,%3Csvg xmlns='http://www.w3.org/2000/svg' width='12' height='12'%3E%3Cpath d='M7 1.500h3.500v5H1.500M5.500 2.500l-4 4 4 4' fill='none' stroke='%23888'/%3E%3C/svg%3E") no-repeat;
}

.response u {
    text-decoration: underline double #2b62c9 1px;
    text-underline-offset: 4px;
}

.response .typo {
    text-decoration: underline wavy #e00 1px;
}

/* annotation frame over the empty number cell */
.redbox {
    position: absolute;
    z-index: 1;
    top: 6px;
    left: 15px;
    width: 26px;
    height: 76px;
    border: 4px solid #d01122;
}

.page-foot {
    display: flex;
    justify-content: space-between;
    align-items: flex-start;
    padding: 25px 91px 0 44px;
    color: #808080;
}

.page-foot p {
    padding-top: 13px;
}

.corner {
    width: 31px;
    height: 31px;
    border-top: 1px solid #a0a0a0;
}

.corner.left {
    border-right: 1px solid #a0a0a0;
}

.corner.right {
    border-left: 1px solid #a0a0a0;
}

.page-head {
    text-align: center;
    line-height: 22px;
    font-weight: bold;
    color: #808080;
    white-space: nowrap;
}

.page-head .project {
    height: 25px;
    border: 1px solid #a0a0a0;
    border-width: 0 1px 2px;
}

.logo {
    position: absolute;
    top: 42px;
    left: 32px;
    display: flex;
    flex-direction: column;
    color: #9a9acb;
}

.logo-cn {
    padding-left: 12px;
    font-size: 32px;
    line-height: 48px;
    font-weight: bold;
}

.logo-cn sup {
    font-size: 14px;
    line-height: 0;
    font-weight: normal;
    vertical-align: 20px;
}

.logo-en {
    font-size: 26px;
    line-height: 28px;
    font-style: italic;
}

/* status bar */
.status {
    display: flex;
    align-items: center;
    gap: 19px;
    flex: none;
    height: 22px;
    padding-left: 10px;
    background: #f3f3f3;
    border-top: 1px solid #c6c6c6;
    white-space: nowrap;
}

.access {
    display: flex;
    align-items: center;
    gap: 3px;
    font-weight: 500;
}

.views {
    display: flex;
    align-items: center;
    align-self: stretch;
    margin-left: auto;
    padding-right: 8px;
}

.views button {
    display: flex;
    align-items: center;
    justify-content: center;
    width: 40px;
    height: 21px;
}

.views .on {
    background: #c6c6c6;
}

.zoom {
    padding-left: 10px;
}

/* right side strip */
.sidebar {
    display: flex;
    flex-direction: column;
    align-items: center;
    padding-left: 5px;
    background: linear-gradient(#e3ebfd 38px, #fff 38px);
}

.sidebar button {
    display: flex;
    align-items: center;
    height: 34px;
}

.sidebar button:nth-of-type(2) {
    margin-top: 4px;
}

.sidebar hr {
    width: 16px;
    margin: 10px 0 8px;
    border: 0;
    border-top: 1px solid #ddd;
}

.sidebar hr + button {
    margin-bottom: 4px;
}

.toggle {
    display: flex;
    align-items: center;
    justify-content: space-between;
    width: 23px;
    height: 16px;
    margin: 10px 0 15px;
    padding: 1px 1px 1px 5px;
    border-radius: 3px;
    background: #d0d8e8;
}

.toggle span {
    width: 2px;
    height: 8px;
    background: #b4bac6;
}

.toggle b {
    width: 12px;
    height: 14px;
    border: solid #fff;
    border-width: 6px 2px;
    border-radius: 2px;
    background: #777;
}

/* taskbar */
.taskbar {
    grid-column: 1 / -1;
    display: flex;
    align-items: flex-start;
    overflow: hidden;
    background: linear-gradient(to right, #24363e, #233139 50%, #2a2e30 75%, #1b2c35);
    color: #fff;
}

.taskbar button {
    flex: none;
    width: 49px;
    height: 40px;
    line-height: 0;
}

.taskbar .start {
    width: 47px;
}

.taskbar .on {
    background: #4f5b61;
}

.ps {
    font-size: 11px;
    font-weight: bold;
    fill: #fff;
}

.xin {
    font-size: 12px;
    font-style: italic;
    font-weight: bold;
    fill: #1d67b0;
}

.clock {
    display: flex;
    flex-direction: column;
    align-items: center;
    margin-left: auto;
    padding-top: 2px;
    line-height: 17px;
}

.taskbar .second-start {
    width: 34px;
    margin-left: 6px;
    padding-left: 12px;
    text-align: left;
}
```
